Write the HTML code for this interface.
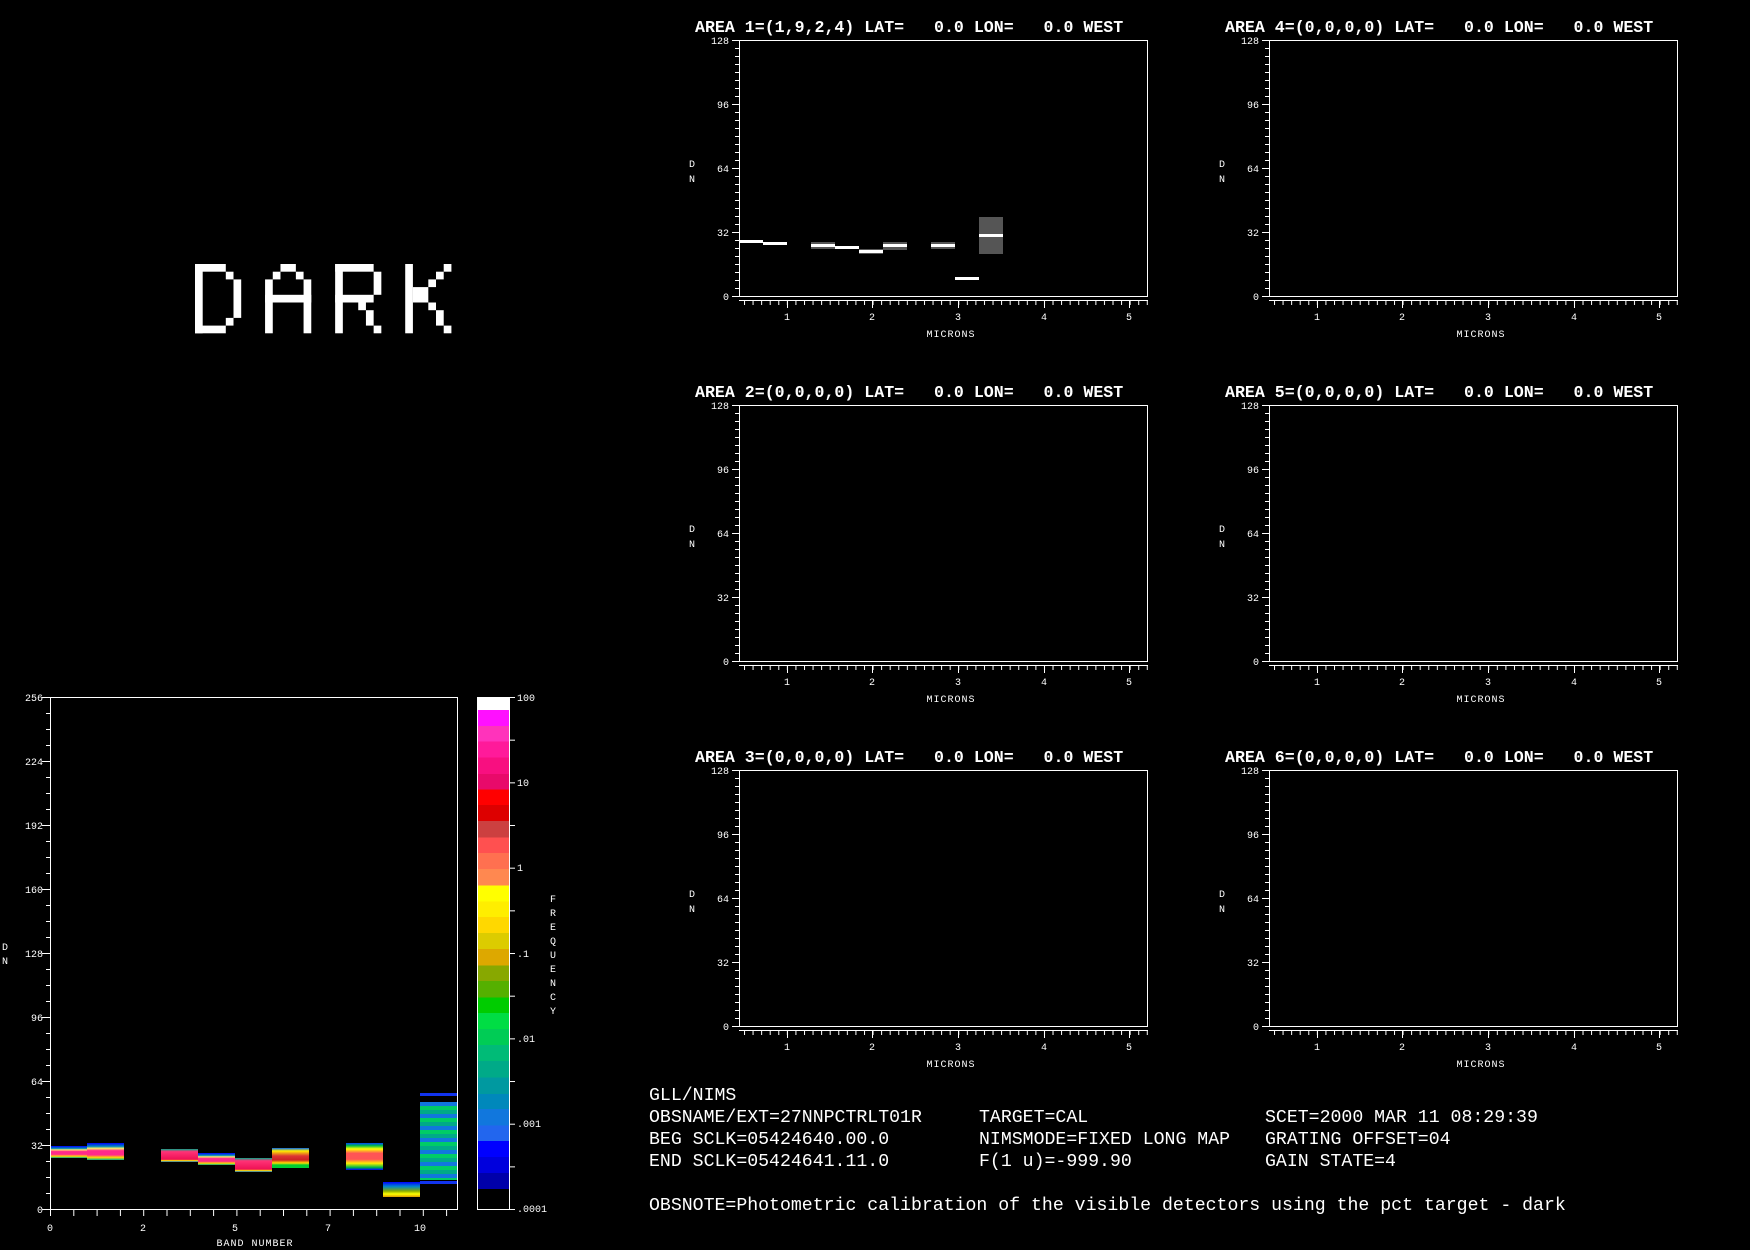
<!DOCTYPE html>
<html><head><meta charset="utf-8"><style>
html,body{margin:0;padding:0;background:#000;}
svg{display:block}
text{fill:#fff;font-family:"Liberation Mono",monospace;white-space:pre}
.t{font-size:16.6px;font-weight:bold}
.s{font-size:10px}
.b{font-size:18.2px}
</style></head><body>
<svg width="1750" height="1250" viewBox="0 0 1750 1250" xmlns="http://www.w3.org/2000/svg">
<defs>
<pattern id="vt" patternUnits="userSpaceOnUse" x="0" y="40" width="4" height="8"><rect x="0" y="0" width="4" height="1" fill="#fff"/></pattern>
<pattern id="ht" patternUnits="userSpaceOnUse" x="744" y="0" width="8.57" height="10"><rect x="0" y="0" width="1" height="10" fill="#fff"/></pattern>
<pattern id="hvt" patternUnits="userSpaceOnUse" x="0" y="697" width="4" height="16"><rect x="0" y="0" width="4" height="1" fill="#fff"/></pattern>
<pattern id="hht" patternUnits="userSpaceOnUse" x="50" y="0" width="23.3" height="10"><rect x="0" y="0" width="1" height="10" fill="#fff"/></pattern>
<pattern id="cbt" patternUnits="userSpaceOnUse" x="0" y="697" width="6" height="42.67"><rect x="0" y="0" width="6" height="1" fill="#fff"/></pattern>
<linearGradient id="cb" x1="0" y1="0" x2="0" y2="1">
<stop offset="0" stop-color="#fff"/><stop offset=".025" stop-color="#fff"/>
<stop offset=".025" stop-color="#ff10ff"/><stop offset=".057" stop-color="#ff10ff"/>
<stop offset=".057" stop-color="#ff33bb"/><stop offset=".087" stop-color="#ff33bb"/>
<stop offset=".087" stop-color="#ff1a9a"/><stop offset=".118" stop-color="#ff1a9a"/>
<stop offset=".118" stop-color="#f80f80"/><stop offset=".150" stop-color="#f80f80"/>
<stop offset=".150" stop-color="#e80a6a"/><stop offset=".181" stop-color="#e80a6a"/>
<stop offset=".181" stop-color="#ff0000"/><stop offset=".211" stop-color="#ff0000"/>
<stop offset=".211" stop-color="#dd0000"/><stop offset=".242" stop-color="#dd0000"/>
<stop offset=".242" stop-color="#cc4040"/><stop offset=".274" stop-color="#cc4040"/>
<stop offset=".274" stop-color="#ff5050"/><stop offset=".305" stop-color="#ff5050"/>
<stop offset=".305" stop-color="#ff7050"/><stop offset=".336" stop-color="#ff7050"/>
<stop offset=".336" stop-color="#ff8850"/><stop offset=".368" stop-color="#ff8850"/>
<stop offset=".368" stop-color="#ffff00"/><stop offset=".399" stop-color="#ffff00"/>
<stop offset=".399" stop-color="#ffee00"/><stop offset=".430" stop-color="#ffee00"/>
<stop offset=".430" stop-color="#ffd800"/><stop offset=".461" stop-color="#ffd800"/>
<stop offset=".461" stop-color="#dccc00"/><stop offset=".492" stop-color="#dccc00"/>
<stop offset=".492" stop-color="#dda800"/><stop offset=".524" stop-color="#dda800"/>
<stop offset=".524" stop-color="#88a800"/><stop offset=".555" stop-color="#88a800"/>
<stop offset=".555" stop-color="#55b000"/><stop offset=".587" stop-color="#55b000"/>
<stop offset=".587" stop-color="#00cc00"/><stop offset=".617" stop-color="#00cc00"/>
<stop offset=".617" stop-color="#00dd44"/><stop offset=".648" stop-color="#00dd44"/>
<stop offset=".648" stop-color="#00cc55"/><stop offset=".680" stop-color="#00cc55"/>
<stop offset=".680" stop-color="#00bb77"/><stop offset=".711" stop-color="#00bb77"/>
<stop offset=".711" stop-color="#00aa88"/><stop offset=".743" stop-color="#00aa88"/>
<stop offset=".743" stop-color="#0099a0"/><stop offset=".775" stop-color="#0099a0"/>
<stop offset=".775" stop-color="#0088bb"/><stop offset=".805" stop-color="#0088bb"/>
<stop offset=".805" stop-color="#1177dd"/><stop offset=".837" stop-color="#1177dd"/>
<stop offset=".837" stop-color="#2266ee"/><stop offset=".867" stop-color="#2266ee"/>
<stop offset=".867" stop-color="#0000ff"/><stop offset=".898" stop-color="#0000ff"/>
<stop offset=".898" stop-color="#0000dd"/><stop offset=".930" stop-color="#0000dd"/>
<stop offset=".930" stop-color="#0000aa"/><stop offset=".961" stop-color="#0000aa"/>
<stop offset=".961" stop-color="#000"/><stop offset="1" stop-color="#000"/>
</linearGradient>
<linearGradient id="g1" x1="0" y1="0" x2="0" y2="1">
<stop offset="0" stop-color="#0000ff"/><stop offset=".2" stop-color="#0088bb"/><stop offset=".32" stop-color="#ffee66"/><stop offset=".45" stop-color="#ff2a8a"/><stop offset=".7" stop-color="#ff2a8a"/><stop offset=".85" stop-color="#ffdd00"/><stop offset="1" stop-color="#00aa88"/></linearGradient>
<linearGradient id="g2" x1="0" y1="0" x2="0" y2="1">
<stop offset="0" stop-color="#00aa88"/><stop offset=".2" stop-color="#ff3377"/><stop offset=".8" stop-color="#ee1155"/><stop offset=".9" stop-color="#ffee00"/><stop offset="1" stop-color="#0066dd"/></linearGradient>
<linearGradient id="g3" x1="0" y1="0" x2="0" y2="1">
<stop offset="0" stop-color="#0066ee"/><stop offset=".15" stop-color="#ffee00"/><stop offset=".4" stop-color="#dd3333"/><stop offset=".6" stop-color="#cc2222"/><stop offset=".75" stop-color="#ffdd00"/><stop offset=".85" stop-color="#00cc33"/><stop offset="1" stop-color="#00cc33"/></linearGradient>
<linearGradient id="g4" x1="0" y1="0" x2="0" y2="1">
<stop offset="0" stop-color="#0044ff"/><stop offset=".1" stop-color="#00bb44"/><stop offset=".22" stop-color="#ffff00"/><stop offset=".38" stop-color="#ff5555"/><stop offset=".6" stop-color="#ff5555"/><stop offset=".75" stop-color="#ffee00"/><stop offset=".9" stop-color="#00bb44"/><stop offset="1" stop-color="#0000ff"/></linearGradient>
<linearGradient id="g5" x1="0" y1="0" x2="0" y2="1">
<stop offset="0" stop-color="#0000ff"/><stop offset=".3" stop-color="#0088cc"/><stop offset=".6" stop-color="#88aa00"/><stop offset=".8" stop-color="#ffff00"/><stop offset="1" stop-color="#dd9900"/></linearGradient>
<pattern id="st" patternUnits="userSpaceOnUse" x="0" y="1102" width="10" height="12"><rect width="10" height="4" fill="#1177dd"/><rect y="4" width="10" height="4" fill="#00cc66"/><rect y="8" width="10" height="4" fill="#00aa88"/></pattern>
</defs>

<!-- DARK -->
<g fill="#fff" transform="translate(195,264) scale(7.7)">
<rect x="0" y="0" width="4" height="1"/><rect x="0" y="0" width="1" height="9"/><rect x="0" y="8" width="4" height="1"/><rect x="4" y="1" width="1" height="1"/><rect x="4" y="7" width="1" height="1"/><rect x="5" y="2" width="1" height="5"/>
<g transform="translate(9.1,0)"><rect x="2" y="0" width="2" height="1"/><rect x="1" y="1" width="1" height="1"/><rect x="4" y="1" width="1" height="1"/><rect x="0" y="2" width="1" height="7"/><rect x="5" y="2" width="1" height="7"/><rect x="0" y="4" width="6" height="1"/></g>
<g transform="translate(18.2,0)"><rect x="0" y="0" width="5" height="1"/><rect x="0" y="0" width="1" height="9"/><rect x="5" y="1" width="1" height="3"/><rect x="0" y="4" width="5" height="1"/><rect x="3" y="5" width="1" height="1"/><rect x="4" y="6" width="1" height="2"/><rect x="5" y="8" width="1" height="1"/></g>
<g transform="translate(27.3,0)"><rect x="0" y="0" width="1" height="9"/><rect x="5" y="0" width="1" height="1"/><rect x="4" y="1" width="1" height="1"/><rect x="3" y="2" width="1" height="1"/><rect x="1" y="3" width="2" height="2"/><rect x="3" y="5" width="1" height="1"/><rect x="4" y="6" width="1" height="2"/><rect x="5" y="8" width="1" height="1"/></g>
</g>

<!-- Panels -->
<g id="p1">
<text x="695" y="32" class="t">AREA 1=(1,9,2,4) LAT=   0.0 LON=   0.0 WEST</text>
<rect x="739.5" y="40.5" width="408" height="256" fill="none" stroke="#fff"/>
<rect x="735" y="40" width="4" height="257" fill="url(#vt)"/>
<path d="M732 40.5h7M732 104.5h7M732 168.5h7M732 232.5h7M732 296.5h7M739 300.5H1148M787.5 300v8M872.5 300v8M958.5 300v8M1044.5 300v8M1129.5 300v8" stroke="#fff"/>
<rect x="739" y="300" width="409" height="5" fill="url(#ht)"/>
<text class="s" x="729" y="44" text-anchor="end">128</text><text class="s" x="729" y="108" text-anchor="end">96</text><text class="s" x="729" y="172" text-anchor="end">64</text><text class="s" x="729" y="236" text-anchor="end">32</text><text class="s" x="729" y="300" text-anchor="end">0</text>
<text class="s" x="689" y="167">D</text><text class="s" x="689" y="182">N</text>
<text class="s" x="787" y="320" text-anchor="middle">1</text><text class="s" x="872" y="320" text-anchor="middle">2</text><text class="s" x="958" y="320" text-anchor="middle">3</text><text class="s" x="1044" y="320" text-anchor="middle">4</text><text class="s" x="1129" y="320" text-anchor="middle">5</text>
<text class="s" x="951" y="337" text-anchor="middle" letter-spacing="1">MICRONS</text>
<g fill="#555"><rect x="811" y="242" width="24" height="7"/><rect x="859" y="249" width="24" height="5"/><rect x="883" y="242" width="24" height="8"/><rect x="931" y="242" width="24" height="7"/><rect x="979" y="217" width="24" height="37"/></g>
<g fill="#fff"><rect x="739" y="240" width="24" height="3"/><rect x="763" y="242" width="24" height="3"/><rect x="811" y="244" width="24" height="3"/><rect x="835" y="246" width="24" height="3"/><rect x="859" y="250" width="24" height="3"/><rect x="883" y="244" width="24" height="3"/><rect x="931" y="244" width="24" height="3"/><rect x="955" y="277" width="24" height="3"/><rect x="979" y="234" width="24" height="3"/></g>
</g>

<g transform="translate(530,0)">
<text x="695" y="32" class="t">AREA 4=(0,0,0,0) LAT=   0.0 LON=   0.0 WEST</text>
<rect x="739.5" y="40.5" width="408" height="256" fill="none" stroke="#fff"/>
<rect x="735" y="40" width="4" height="257" fill="url(#vt)"/>
<path d="M732 40.5h7M732 104.5h7M732 168.5h7M732 232.5h7M732 296.5h7M739 300.5H1148M787.5 300v8M872.5 300v8M958.5 300v8M1044.5 300v8M1129.5 300v8" stroke="#fff"/>
<rect x="739" y="300" width="409" height="5" fill="url(#ht)"/>
<text class="s" x="729" y="44" text-anchor="end">128</text><text class="s" x="729" y="108" text-anchor="end">96</text><text class="s" x="729" y="172" text-anchor="end">64</text><text class="s" x="729" y="236" text-anchor="end">32</text><text class="s" x="729" y="300" text-anchor="end">0</text>
<text class="s" x="689" y="167">D</text><text class="s" x="689" y="182">N</text>
<text class="s" x="787" y="320" text-anchor="middle">1</text><text class="s" x="872" y="320" text-anchor="middle">2</text><text class="s" x="958" y="320" text-anchor="middle">3</text><text class="s" x="1044" y="320" text-anchor="middle">4</text><text class="s" x="1129" y="320" text-anchor="middle">5</text>
<text class="s" x="951" y="337" text-anchor="middle" letter-spacing="1">MICRONS</text>
</g>

<g transform="translate(0,365)">
<text x="695" y="32" class="t">AREA 2=(0,0,0,0) LAT=   0.0 LON=   0.0 WEST</text>
<rect x="739.5" y="40.5" width="408" height="256" fill="none" stroke="#fff"/>
<rect x="735" y="40" width="4" height="257" fill="url(#vt)"/>
<path d="M732 40.5h7M732 104.5h7M732 168.5h7M732 232.5h7M732 296.5h7M739 300.5H1148M787.5 300v8M872.5 300v8M958.5 300v8M1044.5 300v8M1129.5 300v8" stroke="#fff"/>
<rect x="739" y="300" width="409" height="5" fill="url(#ht)"/>
<text class="s" x="729" y="44" text-anchor="end">128</text><text class="s" x="729" y="108" text-anchor="end">96</text><text class="s" x="729" y="172" text-anchor="end">64</text><text class="s" x="729" y="236" text-anchor="end">32</text><text class="s" x="729" y="300" text-anchor="end">0</text>
<text class="s" x="689" y="167">D</text><text class="s" x="689" y="182">N</text>
<text class="s" x="787" y="320" text-anchor="middle">1</text><text class="s" x="872" y="320" text-anchor="middle">2</text><text class="s" x="958" y="320" text-anchor="middle">3</text><text class="s" x="1044" y="320" text-anchor="middle">4</text><text class="s" x="1129" y="320" text-anchor="middle">5</text>
<text class="s" x="951" y="337" text-anchor="middle" letter-spacing="1">MICRONS</text>
</g>

<g transform="translate(530,365)">
<text x="695" y="32" class="t">AREA 5=(0,0,0,0) LAT=   0.0 LON=   0.0 WEST</text>
<rect x="739.5" y="40.5" width="408" height="256" fill="none" stroke="#fff"/>
<rect x="735" y="40" width="4" height="257" fill="url(#vt)"/>
<path d="M732 40.5h7M732 104.5h7M732 168.5h7M732 232.5h7M732 296.5h7M739 300.5H1148M787.5 300v8M872.5 300v8M958.5 300v8M1044.5 300v8M1129.5 300v8" stroke="#fff"/>
<rect x="739" y="300" width="409" height="5" fill="url(#ht)"/>
<text class="s" x="729" y="44" text-anchor="end">128</text><text class="s" x="729" y="108" text-anchor="end">96</text><text class="s" x="729" y="172" text-anchor="end">64</text><text class="s" x="729" y="236" text-anchor="end">32</text><text class="s" x="729" y="300" text-anchor="end">0</text>
<text class="s" x="689" y="167">D</text><text class="s" x="689" y="182">N</text>
<text class="s" x="787" y="320" text-anchor="middle">1</text><text class="s" x="872" y="320" text-anchor="middle">2</text><text class="s" x="958" y="320" text-anchor="middle">3</text><text class="s" x="1044" y="320" text-anchor="middle">4</text><text class="s" x="1129" y="320" text-anchor="middle">5</text>
<text class="s" x="951" y="337" text-anchor="middle" letter-spacing="1">MICRONS</text>
</g>

<g transform="translate(0,730)">
<text x="695" y="32" class="t">AREA 3=(0,0,0,0) LAT=   0.0 LON=   0.0 WEST</text>
<rect x="739.5" y="40.5" width="408" height="256" fill="none" stroke="#fff"/>
<rect x="735" y="40" width="4" height="257" fill="url(#vt)"/>
<path d="M732 40.5h7M732 104.5h7M732 168.5h7M732 232.5h7M732 296.5h7M739 300.5H1148M787.5 300v8M872.5 300v8M958.5 300v8M1044.5 300v8M1129.5 300v8" stroke="#fff"/>
<rect x="739" y="300" width="409" height="5" fill="url(#ht)"/>
<text class="s" x="729" y="44" text-anchor="end">128</text><text class="s" x="729" y="108" text-anchor="end">96</text><text class="s" x="729" y="172" text-anchor="end">64</text><text class="s" x="729" y="236" text-anchor="end">32</text><text class="s" x="729" y="300" text-anchor="end">0</text>
<text class="s" x="689" y="167">D</text><text class="s" x="689" y="182">N</text>
<text class="s" x="787" y="320" text-anchor="middle">1</text><text class="s" x="872" y="320" text-anchor="middle">2</text><text class="s" x="958" y="320" text-anchor="middle">3</text><text class="s" x="1044" y="320" text-anchor="middle">4</text><text class="s" x="1129" y="320" text-anchor="middle">5</text>
<text class="s" x="951" y="337" text-anchor="middle" letter-spacing="1">MICRONS</text>
</g>

<g transform="translate(530,730)">
<text x="695" y="32" class="t">AREA 6=(0,0,0,0) LAT=   0.0 LON=   0.0 WEST</text>
<rect x="739.5" y="40.5" width="408" height="256" fill="none" stroke="#fff"/>
<rect x="735" y="40" width="4" height="257" fill="url(#vt)"/>
<path d="M732 40.5h7M732 104.5h7M732 168.5h7M732 232.5h7M732 296.5h7M739 300.5H1148M787.5 300v8M872.5 300v8M958.5 300v8M1044.5 300v8M1129.5 300v8" stroke="#fff"/>
<rect x="739" y="300" width="409" height="5" fill="url(#ht)"/>
<text class="s" x="729" y="44" text-anchor="end">128</text><text class="s" x="729" y="108" text-anchor="end">96</text><text class="s" x="729" y="172" text-anchor="end">64</text><text class="s" x="729" y="236" text-anchor="end">32</text><text class="s" x="729" y="300" text-anchor="end">0</text>
<text class="s" x="689" y="167">D</text><text class="s" x="689" y="182">N</text>
<text class="s" x="787" y="320" text-anchor="middle">1</text><text class="s" x="872" y="320" text-anchor="middle">2</text><text class="s" x="958" y="320" text-anchor="middle">3</text><text class="s" x="1044" y="320" text-anchor="middle">4</text><text class="s" x="1129" y="320" text-anchor="middle">5</text>
<text class="s" x="951" y="337" text-anchor="middle" letter-spacing="1">MICRONS</text>
</g>

<!-- Histogram -->
<rect x="50" y="1146" width="37" height="12" fill="url(#g1)"/>
<rect x="87" y="1143" width="37" height="17" fill="url(#g1)"/>
<rect x="161" y="1149" width="37" height="13" fill="url(#g2)"/>
<rect x="198" y="1153" width="37" height="12" fill="url(#g1)"/>
<rect x="235" y="1158" width="37" height="14" fill="url(#g2)"/>
<rect x="272" y="1148" width="37" height="20" fill="url(#g3)"/>
<rect x="346" y="1143" width="37" height="27" fill="url(#g4)"/>
<rect x="383" y="1182" width="37" height="15" fill="url(#g5)"/>
<rect x="420" y="1093" width="37" height="3" fill="#1133ee"/>
<rect x="420" y="1102" width="37" height="78" fill="url(#st)"/>
<rect x="420" y="1181" width="37" height="3" fill="#1133ee"/>
<rect x="50.5" y="697.5" width="407" height="512" fill="none" stroke="#fff"/>
<rect x="46" y="697" width="4" height="513" fill="url(#hvt)"/>
<path d="M42 697.5h8M42 761.5h8M42 825.5h8M42 889.5h8M42 953.5h8M42 1017.5h8M42 1081.5h8M42 1145.5h8M42 1209.5h8" stroke="#fff"/>
<rect x="50" y="1210" width="409" height="6" fill="url(#hht)"/>
<g class="s"><text class="s" x="43" y="701" text-anchor="end">256</text><text class="s" x="43" y="765" text-anchor="end">224</text><text class="s" x="43" y="829" text-anchor="end">192</text><text class="s" x="43" y="893" text-anchor="end">160</text><text class="s" x="43" y="957" text-anchor="end">128</text><text class="s" x="43" y="1021" text-anchor="end">96</text><text class="s" x="43" y="1085" text-anchor="end">64</text><text class="s" x="43" y="1149" text-anchor="end">32</text><text class="s" x="43" y="1213" text-anchor="end">0</text></g>
<text class="s" x="2" y="950">D</text><text class="s" x="2" y="964">N</text>
<text class="s" x="50" y="1231" text-anchor="middle">0</text><text class="s" x="143" y="1231" text-anchor="middle">2</text><text class="s" x="235" y="1231" text-anchor="middle">5</text><text class="s" x="328" y="1231" text-anchor="middle">7</text><text class="s" x="420" y="1231" text-anchor="middle">10</text>
<text class="s" x="255" y="1246" text-anchor="middle" letter-spacing="1">BAND NUMBER</text>

<!-- Colorbar -->
<rect x="478" y="697" width="31" height="512" fill="url(#cb)"/>
<rect x="477.5" y="697.5" width="32" height="512" fill="none" stroke="#fff"/>
<rect x="509" y="697" width="6" height="513" fill="url(#cbt)"/>
<text class="s" x="517" y="701">100</text><text class="s" x="517" y="786">10</text><text class="s" x="517" y="871">1</text><text class="s" x="517" y="957">.1</text><text class="s" x="517" y="1042">.01</text><text class="s" x="517" y="1127">.001</text><text class="s" x="517" y="1212">.0001</text>
<g text-anchor="middle"><text class="s" x="553" y="902">F</text><text class="s" x="553" y="916">R</text><text class="s" x="553" y="930">E</text><text class="s" x="553" y="944">Q</text><text class="s" x="553" y="958">U</text><text class="s" x="553" y="972">E</text><text class="s" x="553" y="986">N</text><text class="s" x="553" y="1000">C</text><text class="s" x="553" y="1014">Y</text></g>

<!-- Bottom text -->
<text class="b" x="649" y="1100">GLL/NIMS</text>
<text class="b" x="649" y="1122">OBSNAME/EXT=27NNPCTRLT01R</text>
<text class="b" x="979" y="1122">TARGET=CAL</text>
<text class="b" x="1265" y="1122">SCET=2000 MAR 11 08:29:39</text>
<text class="b" x="649" y="1144">BEG SCLK=05424640.00.0</text>
<text class="b" x="979" y="1144">NIMSMODE=FIXED LONG MAP</text>
<text class="b" x="1265" y="1144">GRATING OFFSET=04</text>
<text class="b" x="649" y="1166">END SCLK=05424641.11.0</text>
<text class="b" x="979" y="1166">F(1 u)=-999.90</text>
<text class="b" x="1265" y="1166">GAIN STATE=4</text>
<text class="b" x="649" y="1210">OBSNOTE=Photometric calibration of the visible detectors using the pct target - dark</text>
</svg>
</body></html>
